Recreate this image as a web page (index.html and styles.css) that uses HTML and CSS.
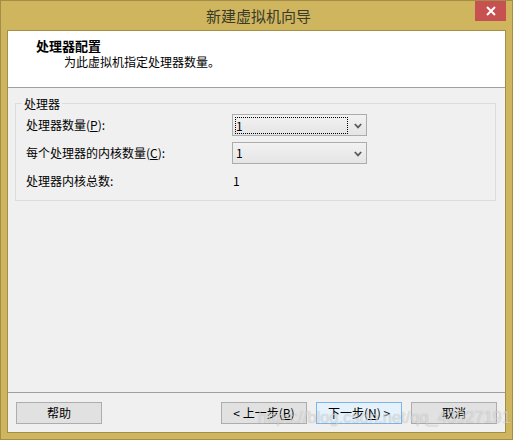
FILE: index.html
```html
<!DOCTYPE html>
<html lang="zh-CN">
<head>
<meta charset="utf-8">
<title>新建虚拟机向导</title>
<link rel="stylesheet" href="styles.css">
</head>
<body>
<div class="window">
  <div class="titlebar">
    <span class="title">新建虚拟机向导</span>
    <div class="close">
      <svg width="10" height="10" viewBox="0 0 10 10"><path d="M1 1 L9 9 M9 1 L1 9" stroke="#fff" stroke-width="2" fill="none"/></svg>
    </div>
  </div>
  <div class="client">
    <div class="header">
      <div class="h-title">处理器配置</div>
      <div class="h-sub">为此虚拟机指定处理器数量。</div>
    </div>
    <div class="body">
      <div class="group">
        <div class="group-title">处理器</div>
        <div class="rows">
          <div class="label">处理器数量(<u>P</u>):</div>
          <div class="combo">
            <span class="focus">1</span>
            <svg class="chev" width="8" height="6" viewBox="0 0 8 6"><path d="M0.8 1 L4 4.4 L7.2 1" stroke="#5a5a5a" stroke-width="1.8" fill="none"/></svg>
          </div>
          <div class="label">每个处理器的内核数量(<u>C</u>):</div>
          <div class="combo">
            <span class="val">1</span>
            <svg class="chev" width="8" height="6" viewBox="0 0 8 6"><path d="M0.8 1 L4 4.4 L7.2 1" stroke="#5a5a5a" stroke-width="1.8" fill="none"/></svg>
          </div>
          <div class="label">处理器内核总数:</div>
          <div class="total">1</div>
        </div>
      </div>
    </div>
    <div class="footer">
      <div class="btn">帮助</div>
      <div class="spacer"></div>
      <div class="btn-group">
        <div class="btn">&lt; 上一步(<u>B</u>)</div>
        <div class="btn default">下一步(<u>N</u>) &gt;</div>
        <div class="btn">取消</div>
      </div>
      <div class="watermark">https://blog.csdn.net/qq_43927191</div>
    </div>
  </div>
</div>
</body>
</html>
```
FILE: styles.css
```css
html, body {
  margin: 0;
  padding: 0;
}
body {
  font-family: "Noto Sans CJK SC", "Noto Sans", sans-serif;
  font-size: 12px;
  color: #000;
}
.window {
  width: 513px;
  height: 440px;
  box-sizing: border-box;
  border: 1px solid #a48d47;
  background: #cfb65e;
  padding: 0 6px 6px 6px;
  display: flex;
  flex-direction: column;
}
.titlebar {
  height: 29px;
  flex: none;
  position: relative;
  display: flex;
  align-items: center;
  justify-content: center;
}
.title {
  font-size: 15px;
  line-height: 18px;
  color: #3a3a2a;
  margin-left: 4px;
}
.close {
  position: absolute;
  right: 0;
  top: 0;
  width: 31px;
  height: 20px;
  background: #c75050;
  display: flex;
  align-items: center;
  justify-content: center;
}
.client {
  flex: 1;
  border: 1px solid #a48d47;
  background: #f0f0f0;
  display: flex;
  flex-direction: column;
  min-height: 0;
}
.header {
  height: 56px;
  flex: none;
  background: #fff;
  border-bottom: 1px solid #a0a0a0;
  padding: 7px 0 0 28px;
  box-sizing: content-box;
  height: 49px;
}
.h-title {
  font-weight: bold;
  font-size: 13px;
  line-height: 16px;
}
.h-sub {
  line-height: 16px;
  margin-left: 28px;
}
.body {
  flex: 1;
  padding-top: 15px;
}
.group {
  margin: 0 9px 0 7px;
  border: 1px solid #dcdcdc;
  padding: 0 0 8px 10px;
}
.group-title {
  margin: -8px 0 0 -4px;
  padding: 0 2px;
  width: fit-content;
  background: #f0f0f0;
  line-height: 16px;
}
.rows {
  margin-top: 2px;
  display: grid;
  grid-template-columns: 206px 135px;
  grid-auto-rows: 22px;
  row-gap: 6px;
  align-items: center;
}
.label {
  line-height: 16px;
}
.combo {
  box-sizing: border-box;
  height: 22px;
  border: 1px solid #acacac;
  background: linear-gradient(#f2f2f2, #e5e5e5);
  display: flex;
  align-items: center;
  padding-left: 2px;
  position: relative;
}
.focus {
  box-sizing: border-box;
  width: 113px;
  height: 17px;
  outline: 1px dotted #000;
  outline-offset: -1px;
  padding-left: 1px;
  line-height: 17px;
}
.val {
  padding-left: 1px;
  line-height: 16px;
}
.chev {
  position: absolute;
  right: 4px;
  top: 8px;
}
.total {
  line-height: 16px;
  margin-left: 1px;
}
.footer {
  flex: none;
  border-top: 1px solid #a0a0a0;
  padding: 9px 8px 8px 8px;
  display: flex;
  position: relative;
}
.spacer {
  flex: 1;
}
.btn-group {
  display: flex;
  gap: 9px;
}
.btn {
  box-sizing: border-box;
  width: 86px;
  height: 22px;
  border: 1px solid #adadad;
  background: #e1e1e1;
  display: flex;
  align-items: center;
  justify-content: center;
  line-height: 16px;
}
.btn.default {
  border-color: #7eb4ea;
  background: #e5f1fb;
}
.watermark {
  position: absolute;
  left: 250px;
  top: 15px;
  font-family: "Liberation Sans", Arial, sans-serif;
  font-size: 16.5px;
  color: rgba(255, 255, 255, 0.55);
  text-shadow: 0 0 1px rgba(0, 0, 0, 0.28);
  white-space: nowrap;
  pointer-events: none;
}
```
